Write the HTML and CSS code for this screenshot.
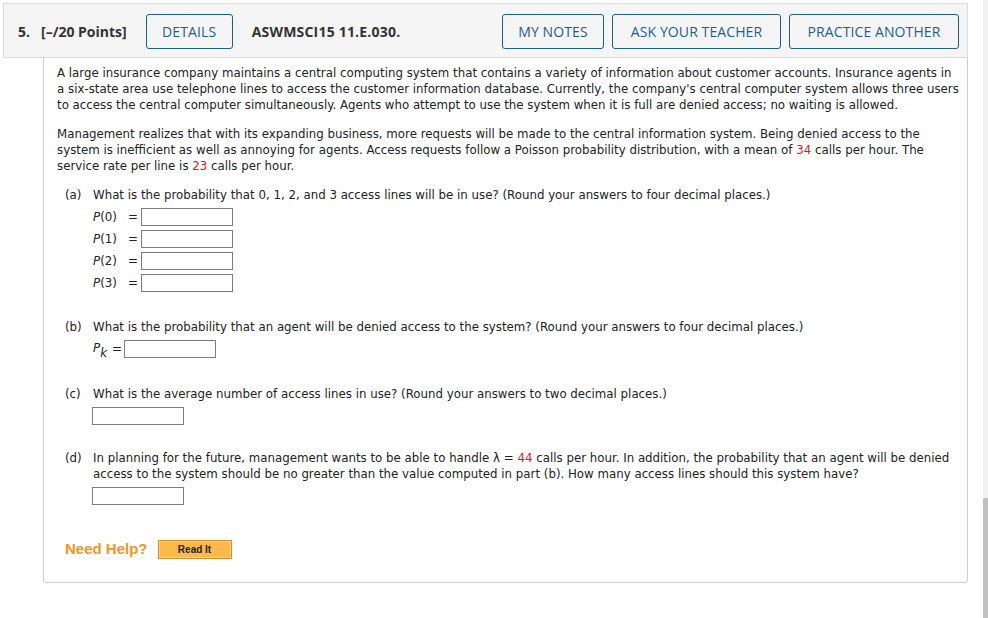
FILE: index.html
```html
<!DOCTYPE html>
<html>
<head>
<meta charset="utf-8">
<link rel="stylesheet" href="styles.css">
</head>
<body>
<div class="page">
  <main class="main">
    <header class="qhead">
      <span class="qnum">5.</span>
      <span class="qpts">[–/20 Points]</span>
      <button class="btn btn-details">DETAILS</button>
      <span class="qcode">ASWMSCI15 11.E.030.</span>
      <div class="actions">
        <button class="btn">MY NOTES</button>
        <button class="btn">ASK YOUR TEACHER</button>
        <button class="btn">PRACTICE ANOTHER</button>
      </div>
    </header>
    <section class="panel">
      <p class="para">A large insurance company maintains a central computing system that contains a variety of information about customer accounts. Insurance agents in<br>a six-state area use telephone lines to access the customer information database. Currently, the company's central computer system allows three users<br>to access the central computer simultaneously. Agents who attempt to use the system when it is full are denied access; no waiting is allowed.</p>
      <p class="para">Management realizes that with its expanding business, more requests will be made to the central information system. Being denied access to the system is inefficient as well as annoying for agents. Access requests follow a Poisson probability distribution, with a mean of <span class="red">34</span> calls per hour. The service rate per line is <span class="red">23</span> calls per hour.</p>

      <div class="part part-a">
        <span class="plabel">(a)</span>
        <div class="pbody">
          <div class="ptext">What is the probability that 0, 1, 2, and 3 access lines will be in use? (Round your answers to four decimal places.)</div>
          <div class="arow"><span class="alabel"><i>P</i>(0)</span><span class="eq">=</span><span class="inp"></span></div>
          <div class="arow"><span class="alabel"><i>P</i>(1)</span><span class="eq">=</span><span class="inp"></span></div>
          <div class="arow"><span class="alabel"><i>P</i>(2)</span><span class="eq">=</span><span class="inp"></span></div>
          <div class="arow"><span class="alabel"><i>P</i>(3)</span><span class="eq">=</span><span class="inp"></span></div>
        </div>
      </div>

      <div class="part part-b">
        <span class="plabel">(b)</span>
        <div class="pbody">
          <div class="ptext">What is the probability that an agent will be denied access to the system? (Round your answers to four decimal places.)</div>
          <div class="arow"><span class="pk"><i>P</i><sub><i>k</i></sub></span><span class="eq eq-k">=</span><span class="inp"></span></div>
        </div>
      </div>

      <div class="part part-c">
        <span class="plabel">(c)</span>
        <div class="pbody">
          <div class="ptext">What is the average number of access lines in use? (Round your answers to two decimal places.)</div>
          <div class="arow"><span class="inp inp-plain"></span></div>
        </div>
      </div>

      <div class="part part-d">
        <span class="plabel">(d)</span>
        <div class="pbody">
          <div class="ptext">In planning for the future, management wants to be able to handle λ = <span class="red">44</span> calls per hour. In addition, the probability that an agent will be denied access to the system should be no greater than the value computed in part (b). How many access lines should this system have?</div>
          <div class="arow"><span class="inp inp-plain"></span></div>
        </div>
      </div>

      <div class="help">
        <span class="help-label">Need Help?</span>
        <button class="readit">Read It</button>
      </div>
    </section>
  </main>
  <aside class="scrollbar"><div class="thumb"></div></aside>
</div>
</body>
</html>
```
FILE: styles.css
```css
* { box-sizing: border-box; }
html, body { margin: 0; padding: 0; background: #fff; }
body { height: 618px; overflow: hidden; }

.page { display: flex; height: 618px; }
.main { flex: 1; padding: 3px 15px 0 3px; }

.qhead {
  display: flex;
  align-items: center;
  height: 55px;
  background: #f5f5f5;
  border: 1px solid #dcdcdc;
  padding: 1px 8px 0 14px;
  font-family: "Open Sans", sans-serif;
  color: #333;
}
.qnum { font-weight: 700; font-size: 14px; }
.qpts { font-weight: 700; font-size: 14px; margin-left: 11px; }
.qcode { font-weight: 700; font-size: 14px; margin-left: 19px; letter-spacing: 0.2px; }
.btn {
  height: 35px;
  padding: 0 14px;
  border: 1px solid #1d5e8f;
  border-radius: 3px;
  background: #f5f5f5;
  color: #1d5e8f;
  font-family: "Open Sans", sans-serif;
  font-size: 14px;
  font-weight: 400;
  letter-spacing: 0.1px;
}
.btn-details { margin-left: 19px; width: 87px; padding: 0; }
.actions { margin-left: auto; display: flex; gap: 8px; }
.actions .btn:nth-child(1) { width: 102px; }
.actions .btn:nth-child(2) { width: 169px; }
.actions .btn:nth-child(3) { width: 170px; }

.panel {
  margin-left: 40px;
  border: 1px solid #cfcfcf;
  border-top: none;
  border-radius: 0 0 3px 3px;
  padding: 7px 3px 22px 13px;
  font-family: "DejaVu Sans", Verdana, sans-serif;
  font-size: 11.8px;
  line-height: 16px;
  color: #222;
}
.para { margin: 0 0 13px 0; white-space: nowrap; }
.para + .para { white-space: normal; padding-right: 10px; }
.red { color: #e8141b; }

.part { display: flex; margin-left: 8px; padding-right: 6px; }
.plabel { width: 28px; flex: none; }
.pbody { flex: 1; }
.ptext { margin-bottom: 3px; }
.arow { display: flex; align-items: center; height: 22px; }
.alabel { width: 35px; }
.eq { width: 13px; }
.pk { width: 19px; position: relative; top: -1px; }
.pk sub { font-size: 11.8px; line-height: 0; vertical-align: -5px; }
.eq-k { width: 12px; }
.inp {
  display: inline-block;
  width: 92px;
  height: 18px;
  border: 1px solid #7d7d7d;
  background: #fff;
}
.inp-plain { margin-left: -1px; }

.part-a { margin-top: 12px; }
.part-b { margin-top: 25px; }
.part-c { margin-top: 26px; }
.part-d { margin-top: 23px; }

.help { display: flex; align-items: center; margin: 31px 0 0 8px; height: 22px; }
.help-label {
  font-family: "Liberation Sans", Arial, sans-serif;
  font-weight: 700;
  font-size: 15px;
  color: #f7941d;
}
.readit {
  margin-left: 10px;
  width: 74px;
  height: 19px;
  padding: 0;
  border: 1px solid #dd8a2c;
  box-shadow: inset 0 0 0 1px #ffd58a;
  background: #fdb94a;
  font-family: "Liberation Sans", Arial, sans-serif;
  font-weight: 700;
  font-size: 10px;
  color: #222;
}

.scrollbar {
  width: 5px;
  flex: none;
  background: #f1f1f1;
  display: flex;
  flex-direction: column;
  justify-content: flex-end;
}
.thumb { height: 120px; background: #c1c1c1; }
```
